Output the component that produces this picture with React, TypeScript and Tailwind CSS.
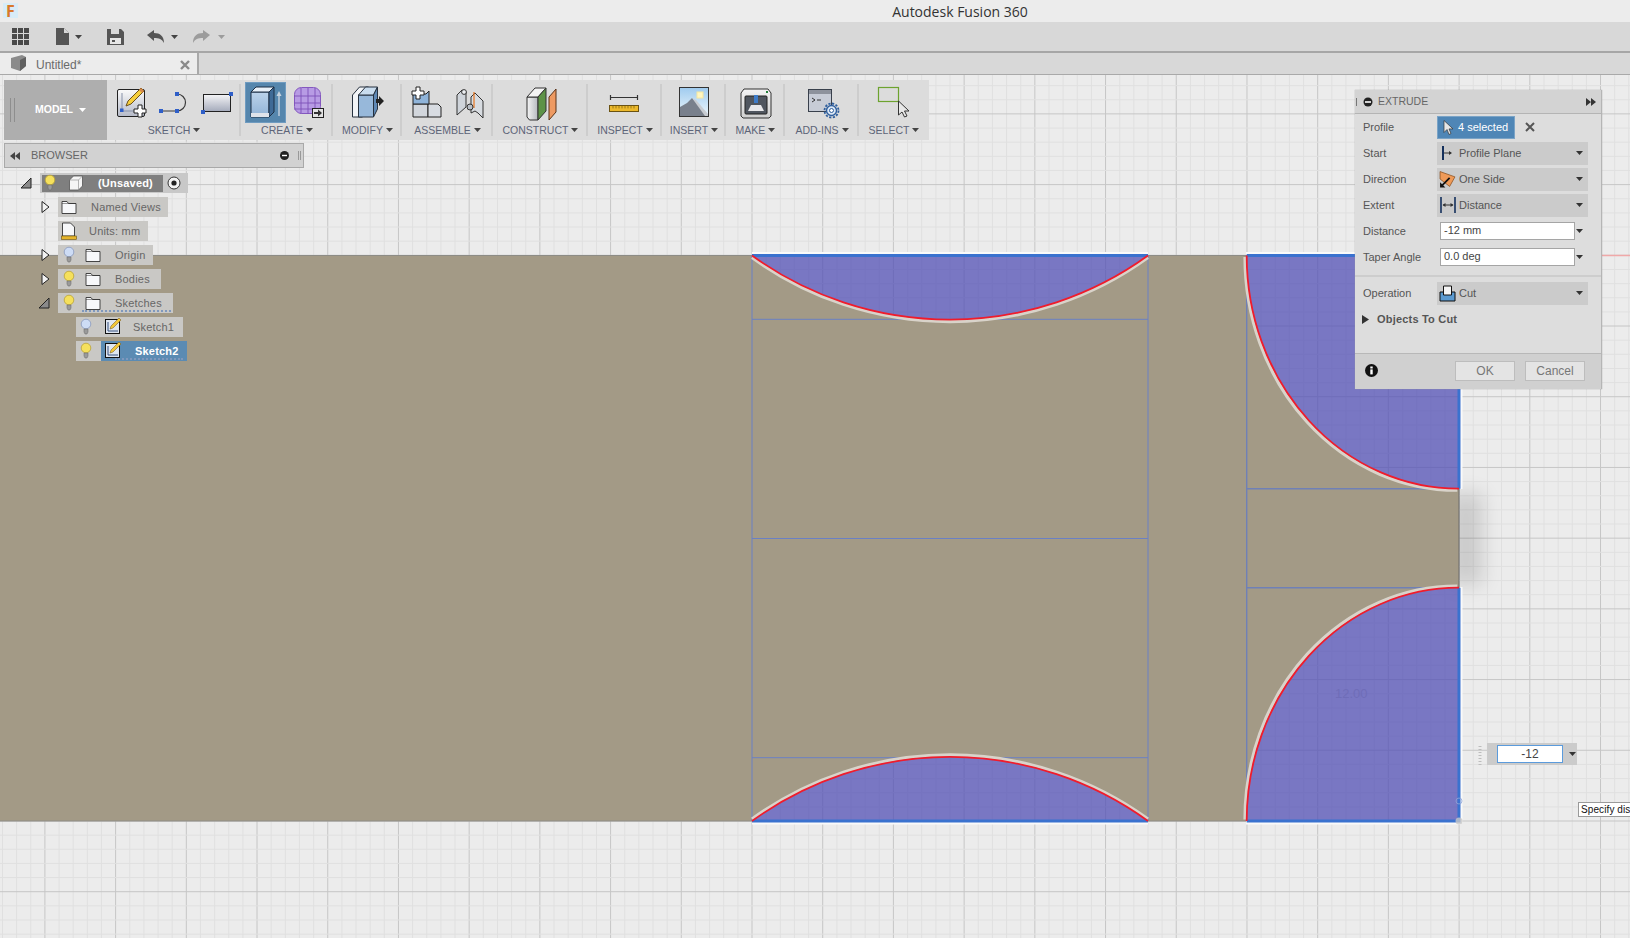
import React from 'react';

const minorX = Array.from({ length: 116 }, (_, i) => 752 - 14.142 * 53 + 14.142 * i);
const minorY = Array.from({ length: 62 }, (_, i) => 890.7 + 14.142 * 3 - 14.142 * i);
const isMajorX = (i: number) => (i - 53) % 5 === 0;
const isMajorY = (i: number) => (i - 3) % 5 === 0;

const TOP_ARC = 'M752 254.5 A338 338 0 0 0 1148 254.5';
const TR_ARC = 'M1246.7 254.5 A212 233 0 0 0 1459 487.7';
const BR_ARC = 'M1459 586.7 A212 233 0 0 0 1246.7 820';
const BOTTOM_ARC = 'M1148 820 A338 338 0 0 0 752 820';

const Caret = ({ className = 'fill-[#444]' }: { className?: string }) => (
  <svg width="7" height="4" viewBox="0 0 7 4" className={className}>
    <path d="M0 0h7L3.5 4z" />
  </svg>
);

const Drawing = () => (
  <svg className="absolute left-0 top-0" width="1630" height="864" viewBox="0 74 1630 864">
    <defs>
      <filter id="soft" x="-100%" y="-50%" width="300%" height="200%">
        <feGaussianBlur stdDeviation="10" />
      </filter>
    </defs>
    {minorX.map((x, i) => (
      <line key={i} x1={x} x2={x} y1="74" y2="938" stroke={isMajorX(i) ? '#c6c6c6' : '#e0e0e0'} strokeWidth="1" />
    ))}
    {minorY.map((y, i) => (
      <line key={i} x1="0" x2="1630" y1={y} y2={y} stroke={isMajorY(i) ? '#c6c6c6' : '#e0e0e0'} strokeWidth="1" />
    ))}
    <line x1="1602" x2="1630" y1="254.5" y2="254.5" stroke="#f0a8a8" strokeWidth="1.5" />
    <rect x="1450" y="492" width="32" height="92" fill="#000" opacity="0.14" filter="url(#soft)" />
    {/* white glow round the cut regions */}
    <path d="M752 252.5H1148M1246 252.5H1459M752 822H1148M1246 822H1461M1461 254V488M1461 586V822" stroke="#fafafa" strokeWidth="3" fill="none" />
    {/* the body */}
    <path
      d="M0 254.5 H752 A338 338 0 0 0 1148 254.5 H1246.7 A212 233 0 0 0 1459 487.7 V586.7 A212 233 0 0 0 1246.7 820 H1148 A338 338 0 0 0 752 820 H0 Z"
      fill="#a39a86"
    />
    <path d="M0 254.5H752M1148 254.5H1246" stroke="#8d8c86" strokeWidth="1" fill="none" />
    <path d="M0 820H752M1148 820H1246" stroke="#8d8c86" strokeWidth="1" fill="none" />
    <path d="M1459 487V587" stroke="#6b6b6b" strokeWidth="1" />
    {/* selected profiles */}
    <g fill="#5451b5" fillOpacity="0.76">
      <path d={`${TOP_ARC} Z`} />
      <path d={`${TR_ARC} V254.5 Z`} />
      <path d={`${BR_ARC} H1459 Z`} />
      <path d={`${BOTTOM_ARC} Z`} />
    </g>
    {/* sketch lines */}
    <path
      d="M752 254V820M1148 254V820M752 318.3H1148M752 537.5H1148M752 756.7H1148"
      stroke="#6a80c4"
      strokeWidth="1"
      fill="none"
    />
    <path d="M1246.7 254V820M1246.7 487.7H1459M1246.7 586.7H1459" stroke="#6f80b6" strokeWidth="1.4" fill="none" />
    <path d="M752 254.5H1148M1246.7 254.5H1459V487.7M1459 586.7V820H1246.7M1148 820H752" stroke="#3a72cf" strokeWidth="3" fill="none" />
    {/* arcs: light edge on the body side, red on the line */}
    <g fill="none" stroke="#d9d3ca" strokeWidth="3.2">
      <path d={TOP_ARC} transform="translate(0 2)" />
      <path d={TR_ARC} transform="translate(-1.7 1.5)" />
      <path d={BR_ARC} transform="translate(-1.7 -1.5)" />
      <path d={BOTTOM_ARC} transform="translate(0 -2)" />
    </g>
    <g fill="none" stroke="#f01c2c" strokeWidth="1.8">
      <path d={TOP_ARC} />
      <path d={TR_ARC} />
      <path d={BR_ARC} />
      <path d={BOTTOM_ARC} />
    </g>
    <circle cx="1459" cy="820" r="3.5" fill="#c8c8c8" opacity="0.8" />
    <circle cx="1459" cy="800" r="3" fill="none" stroke="#8fa5d8" opacity="0.8" />
    <text x="1335" y="697" fontSize="13" fill="#6f6db8" fontFamily="Liberation Sans, sans-serif">
      12.00
    </text>
    <line x1="1480" x2="1480" y1="745" y2="764" stroke="#bdbdbd" strokeWidth="3" strokeDasharray="1 2" />
  </svg>
);

const NewSketchIcon = () => (
  <svg width="40" height="40" viewBox="0 0 40 40">
    <defs>
      <linearGradient id="sk" x1="0" y1="0" x2="0" y2="1">
        <stop offset="0" stopColor="#fafafa" />
        <stop offset="1" stopColor="#b5bac8" />
      </linearGradient>
    </defs>
    <rect x="6.5" y="6.5" width="27" height="27" rx="1.5" fill="url(#sk)" stroke="#222" />
    <path d="M11 10v18h18" stroke="#8791a8" fill="none" />
    <rect x="9" y="25.5" width="3.5" height="3.5" fill="#2f5fc8" />
    <path d="M30 5l3 3-13 13-5 2 2-5z" fill="#f6cf3c" stroke="#6b4f1c" />
    <path d="M30 5l3 3-2 2-3-3z" fill="#d78a4a" />
    <path d="M27 22h4v4h4v4h-4v4h-4v-4h-4v-4h4z" fill="#fff" stroke="#222" />
  </svg>
);

const LineIcon = () => (
  <svg width="40" height="40" viewBox="0 0 40 40">
    <path d="M7 28H23A8.5 8.5 0 0 0 23 11" fill="none" stroke="#3a3a3a" strokeWidth="1.2" />
    <rect x="5" y="26" width="4" height="4" fill="#2f5fc8" />
    <rect x="21" y="26" width="4" height="4" fill="#2f5fc8" />
    <rect x="21" y="9" width="4" height="4" fill="#2f5fc8" />
  </svg>
);

const RectIcon = () => (
  <svg width="40" height="40" viewBox="0 0 40 40">
    <defs>
      <linearGradient id="rc" x1="0" y1="0" x2="0" y2="1">
        <stop offset="0" stopColor="#f5f5f7" />
        <stop offset="1" stopColor="#a4aabb" />
      </linearGradient>
    </defs>
    <rect x="6.5" y="11.5" width="27" height="17" fill="url(#rc)" stroke="#222" />
    <rect x="32" y="9" width="4" height="4" fill="#2f5fc8" />
    <rect x="4" y="27" width="4" height="4" fill="#2f5fc8" />
  </svg>
);

const ExtrudeIcon = () => (
  <svg width="39" height="39" viewBox="0 0 39 39">
    <defs>
      <linearGradient id="ex" x1="0" y1="0" x2="0" y2="1">
        <stop offset="0" stopColor="#bcd3ea" />
        <stop offset="1" stopColor="#8fb2d6" />
      </linearGradient>
    </defs>
    <path d="M5 9h18v25H5z" fill="url(#ex)" stroke="#1d2f44" />
    <path d="M5 9l5-5h18l-5 5z" fill="#e8f0f8" stroke="#1d2f44" />
    <path d="M23 9l5-5v25l-5 5z" fill="#3f6a96" stroke="#1d2f44" />
    <path d="M5 30h18v4H5z" fill="#dfe3ea" />
    <path d="M33 33V10" stroke="#c6d2de" strokeWidth="1.4" />
    <path d="M33 8l-2.5 5h5z" fill="#c6d2de" />
  </svg>
);

const FormIcon = () => (
  <svg width="40" height="40" viewBox="0 0 40 40">
    <rect x="6.5" y="4.5" width="26" height="26" rx="7" fill="#b79be4" stroke="#8458bf" />
    <path d="M6 13h26M6 20h26M6 26h26M13 5v26M20 5v26M27 5v26" stroke="#7d50b8" strokeWidth="0.9" />
    <rect x="24.5" y="25.5" width="11" height="9" fill="#e4e4e4" stroke="#222" />
    <path d="M26 29h4v-2.5l4 3.5-4 3.5V31h-4z" fill="#333" />
  </svg>
);

const PressPullIcon = () => (
  <svg width="40" height="40" viewBox="0 0 40 40">
    <path d="M4.5 34V12l7-8h9l-6 8v22z" fill="#f2f4f7" stroke="#26313f" />
    <path d="M10.5 12h15v22h-15z" fill="#97b8da" stroke="#26313f" />
    <path d="M10.5 12l7-8h12l-4 8z" fill="#c9dcee" stroke="#26313f" />
    <path d="M25.5 12l4-8v22l-4 8z" fill="#5f88b4" stroke="#26313f" />
    <path d="M28 16h3v-3l5 5-5 5v-3h-3z" fill="#222" />
  </svg>
);

const NewComponentIcon = () => (
  <svg width="40" height="40" viewBox="0 0 40 40">
    <path d="M7 21h15v13H7z" fill="#d2d6dc" stroke="#222" />
    <path d="M22 21h10l3 3v10H22z" fill="#d8dce2" stroke="#222" />
    <path d="M7 21l0-10h13l3-3v13H7z" fill="#8fb4da" stroke="#222" />
    <path d="M10 4h4v4h4v4h-4v4h-4v-4H6V8h4z" fill="#fff" stroke="#222" />
  </svg>
);

const JointIcon = () => (
  <svg width="40" height="40" viewBox="0 0 40 40">
    <path d="M8 32V12l5-5 4 2v15z" fill="#cfd4da" stroke="#333" />
    <circle cx="15" cy="9" r="2.4" fill="#eef0f3" stroke="#333" />
    <path d="M22 30l0-16 4-4 8 8v17l-5-5-3-2z" fill="#d8dce1" stroke="#333" />
    <path d="M25 9v16" stroke="#e8731c" strokeWidth="1.2" />
    <circle cx="21" cy="24" r="3" fill="#b8bec6" stroke="#333" />
  </svg>
);

const ConstructIcon = () => (
  <svg width="40" height="40" viewBox="0 0 40 40">
    <defs>
      <linearGradient id="co" x1="0" y1="0" x2="1" y2="0">
        <stop offset="0" stopColor="#f5f5f5" />
        <stop offset="1" stopColor="#b4b8be" />
      </linearGradient>
    </defs>
    <path d="M6 14h11v23H8.5L6 34z" fill="url(#co)" stroke="#333" />
    <path d="M6 14l8-9h11l-8 9z" fill="#f4f4f4" stroke="#333" />
    <path d="M17 14l8-9v23l-8 9z" fill="#5d9247" stroke="#333" />
    <path d="M28 14l7-8v23l-7 8z" fill="#ee9a62" stroke="#5a3318" />
  </svg>
);

const InspectIcon = () => (
  <svg width="40" height="40" viewBox="1 0 40 40">
    <path d="M6 14.5h28M6.5 12v5M33.5 12v5" stroke="#333" strokeWidth="1.2" />
    <rect x="5.5" y="22.5" width="29" height="6" fill="#ecb92c" stroke="#6b5312" />
    <path d="M9 23v2.4M12 23v2.4M15 23v2.4M18 23v2.4M21 23v2.4M24 23v2.4M27 23v2.4M30 23v2.4" stroke="#7a5e10" strokeWidth="0.7" />
  </svg>
);

const InsertIcon = () => (
  <svg width="40" height="40" viewBox="0 0 40 40">
    <defs>
      <linearGradient id="sky" x1="0" y1="0" x2="0" y2="1">
        <stop offset="0" stopColor="#9fcbef" />
        <stop offset="1" stopColor="#eef6fb" />
      </linearGradient>
    </defs>
    <rect x="5.5" y="4.5" width="29" height="29" fill="url(#sky)" stroke="#333" />
    <rect x="23" y="9" width="6" height="6" fill="#fff6c0" stroke="#f6e7a0" />
    <path d="M6 33V24l7-4 5-5 6 6 10 11v1z" fill="#79808c" />
    <path d="M18 15l4 2 12 14v2h-3z" fill="#c8ccd2" />
  </svg>
);

const MakeIcon = () => (
  <svg width="40" height="40" viewBox="0 0 40 40">
    <defs>
      <linearGradient id="mk" x1="0" y1="0" x2="0" y2="1">
        <stop offset="0" stopColor="#f4f4f4" />
        <stop offset="1" stopColor="#cfcfcf" />
      </linearGradient>
    </defs>
    <path d="M8 6h24l3 4v23l-2 2H7l-2-2V10z" fill="url(#mk)" stroke="#333" />
    <rect x="9" y="13" width="22" height="18" rx="1" fill="#50565f" stroke="#222" />
    <rect x="18" y="12" width="4" height="8" fill="#3f7cc8" />
    <path d="M12 28l3-6h10l3 6z" fill="#e8e8ea" />
    <rect x="30" y="8" width="2" height="2" fill="#22803a" />
  </svg>
);

const AddInsIcon = () => (
  <svg width="40" height="40" viewBox="1 0 40 40">
    <rect x="7.5" y="6.5" width="23" height="22" fill="#c7ccd6" stroke="#39404c" />
    <rect x="8" y="7" width="22" height="4" fill="#8d929c" />
    <path d="M11 15l3 2-3 2M16 17h4" stroke="#222" strokeWidth="0.9" fill="none" />
    <circle cx="30.5" cy="27.5" r="5" fill="#dbe7f5" stroke="#2f5f9e" strokeWidth="1.4" />
    <circle cx="30.5" cy="27.5" r="7" fill="none" stroke="#2f5f9e" strokeWidth="1.8" strokeDasharray="2.2 1.5" />
    <circle cx="30.5" cy="27.5" r="2" fill="#fff" stroke="#2f5f9e" />
  </svg>
);

const SelectIcon = () => (
  <svg width="40" height="40" viewBox="2 0 40 40">
    <rect x="6.5" y="4.5" width="20" height="14" fill="none" stroke="#6da32f" strokeWidth="1.2" />
    <path d="M26.5 18v14l3.5-3 2.5 5 2.5-1-2.5-5h4.5z" fill="#e8e8e8" stroke="#333" />
  </svg>
);

const Section = ({ label, width, children, last }: { label: string; width: string; children: React.ReactNode; last?: boolean }) => (
  <div className={`flex flex-col items-center ${width} relative`}>
    <div className="mt-[3px] flex h-[40px] items-start justify-center gap-[3px]">{children}</div>
    <div className="flex items-center gap-[3px] whitespace-nowrap text-[10.5px] leading-[14px] text-[#5d6478]">
      {label}
      <Caret />
    </div>
    {!last && <div className="absolute bottom-[4px] right-0 top-[4px] w-[2px] bg-[#cdcdcd]" />}
  </div>
);

const Toolbar = () => (
  <div className="ml-1 flex h-[60px] w-[925px] bg-[#dcdcdc]">
    <div className="relative flex w-[103px] items-center justify-center gap-[6px] bg-[#aeaeae] pl-[10px] text-[10.5px] font-bold text-white">
      <div className="absolute left-[6px] top-[18px] h-[24px] w-[5px] border-x border-[#8e8e8e]" />
      MODEL
      <Caret className="fill-white" />
    </div>
    <Section label="SKETCH" width="w-[134px]">
      <NewSketchIcon />
      <LineIcon />
      <RectIcon />
    </Section>
    <Section label="CREATE" width="w-[92px]">
      <div className="bg-[#5586ad] ring-1 ring-[#6f9bc0]">
        <ExtrudeIcon />
      </div>
      <FormIcon />
    </Section>
    <Section label="MODIFY" width="w-[69px]">
      <PressPullIcon />
    </Section>
    <Section label="ASSEMBLE" width="w-[91px]">
      <NewComponentIcon />
      <JointIcon />
    </Section>
    <Section label="CONSTRUCT" width="w-[95px]">
      <ConstructIcon />
    </Section>
    <Section label="INSPECT" width="w-[74px]">
      <InspectIcon />
    </Section>
    <Section label="INSERT" width="w-[64px]">
      <InsertIcon />
    </Section>
    <Section label="MAKE" width="w-[59px]">
      <MakeIcon />
    </Section>
    <Section label="ADD-INS" width="w-[74px]">
      <AddInsIcon />
    </Section>
    <Section label="SELECT" width="w-[70px]" last>
      <SelectIcon />
    </Section>
  </div>
);

const Bulb = ({ on }: { on: boolean }) => (
  <svg width="12" height="18" viewBox="0 0 12 18">
    <circle cx="6" cy="6" r="4.8" fill={on ? '#f5e05c' : '#cddcf5'} stroke={on ? '#b9a236' : '#8898bc'} strokeWidth="0.8" />
    <path d="M4 11h4v3l-1 2H5l-1-2z" fill="#9a9a9a" stroke="#666" strokeWidth="0.5" />
  </svg>
);

const FolderIcon = () => (
  <svg width="16" height="14" viewBox="0 0 16 14">
    <path d="M1 1.5h5l1.5 2h7.5v10H1z" fill="#f7f8fa" stroke="#333" strokeWidth="0.9" />
    <path d="M1 3.5h14" stroke="#333" strokeWidth="0.5" />
  </svg>
);

const SketchDocIcon = () => (
  <svg width="18" height="18" viewBox="0 0 18 18">
    <rect x="1.5" y="1.5" width="14" height="14" fill="#dfe6f0" stroke="#111" />
    <path d="M4 4v9h10" stroke="#36507e" fill="none" />
    <path d="M15 0l2 2-8 8-3 1 1-3z" fill="#f3c838" stroke="#6b4f1c" strokeWidth="0.5" />
  </svg>
);

const Expander = ({ open }: { open?: boolean }) => (
  <svg width="12" height="14" viewBox="0 0 12 14" className={open ? '-ml-[2px]' : ''}>
    {open ? (
      <path d="M11 2v10H1z" fill="#8a8a8a" stroke="#222" />
    ) : (
      <path d="M2 1.5l7 5.5-7 5.5z" fill="#f2f2f2" stroke="#222" />
    )}
  </svg>
);

const TreeRow = ({ indent, expander, children, width }: { indent: string; expander?: 'open' | 'closed'; children: React.ReactNode; width: string }) => (
  <div className={`flex h-5 items-center ${indent}`}>
    <div className="flex w-[18px] items-center">{expander && <Expander open={expander === 'open'} />}</div>
    <div className={`relative flex h-5 items-center bg-[#c9c8c5] text-[11px] tracking-[0.2px] text-[#666] ${width}`}>{children}</div>
  </div>
);

const Browser = () => (
  <div className="mt-[3px] flex flex-col">
    <div className="ml-1 flex h-[25px] w-[300px] items-center border border-[#a9a9a9] bg-[#d2d2d2] text-[11px] text-[#666]">
      <svg width="10" height="8" viewBox="0 0 10 8" className="ml-[5px] fill-[#444]">
        <path d="M5 0v8L0 4zM10 0v8L5 4z" />
      </svg>
      <span className="ml-[11px] flex-1">BROWSER</span>
      <svg width="9" height="9" viewBox="0 0 9 9">
        <circle cx="4.5" cy="4.5" r="4.5" fill="#222" />
        <rect x="2" y="3.8" width="5" height="1.4" fill="#fff" />
      </svg>
      <div className="ml-[9px] mr-[2px] h-[9px] w-[3px] border-x border-[#999]" />
    </div>
    <div className="mt-[5px] flex flex-col gap-1">
      <div className="flex h-5 items-center pl-[22px]">
        <div className="flex w-[18px] items-center">
          <Expander open />
        </div>
        <div className="flex h-5 w-[148px] items-center bg-[#c8c8c8] pl-[2px]">
          <div className="flex h-[17px] w-[121px] items-center bg-[#7f7f7f] pl-[2px]">
            <Bulb on />
            <svg width="16" height="16" viewBox="0 0 16 16" className="ml-[12px]">
              <path d="M1.5 5l4-4h9v10l-4 4h-9z" fill="#f5f5f5" stroke="#555" strokeWidth="0.8" />
              <path d="M1.5 5h9v10M10.5 5l4-4" fill="none" stroke="#888" strokeWidth="0.6" />
            </svg>
            <span className="ml-[14px] text-[11px] font-bold tracking-[0.2px] text-white">(Unsaved)</span>
          </div>
          <svg width="14" height="14" viewBox="0 0 14 14" className="ml-1">
            <circle cx="7" cy="7" r="6" fill="#f4f4f4" stroke="#333" />
            <circle cx="7" cy="7" r="2.6" fill="#222" />
          </svg>
        </div>
      </div>
      <TreeRow indent="pl-[40px]" expander="closed" width="w-[110px]">
        <span className="ml-[3px]"><FolderIcon /></span>
        <span className="ml-[14px]">Named Views</span>
      </TreeRow>
      <TreeRow indent="pl-[40px]" width="w-[90px]">
        <svg width="16" height="18" viewBox="0 0 16 18" className="ml-[3px]">
          <path d="M1.5 1h8l4 4v9h-12z" fill="#f6f7f9" stroke="#333" strokeWidth="0.9" />
          <rect x="0.5" y="14" width="15" height="3.5" fill="#e5b52c" stroke="#6b5312" strokeWidth="0.6" />
        </svg>
        <span className="ml-[12px]">Units: mm</span>
      </TreeRow>
      <TreeRow indent="pl-[40px]" expander="closed" width="w-[95px]">
        <span className="ml-[5px] flex"><Bulb on={false} /></span>
        <span className="ml-[10px]"><FolderIcon /></span>
        <span className="ml-[14px]">Origin</span>
      </TreeRow>
      <TreeRow indent="pl-[40px]" expander="closed" width="w-[103px]">
        <span className="ml-[5px] flex"><Bulb on /></span>
        <span className="ml-[10px]"><FolderIcon /></span>
        <span className="ml-[14px]">Bodies</span>
      </TreeRow>
      <TreeRow indent="pl-[40px]" expander="open" width="w-[115px]">
        <span className="ml-[5px] flex"><Bulb on /></span>
        <span className="ml-[10px]"><FolderIcon /></span>
        <span className="ml-[14px]">Sketches</span>
        <div className="absolute bottom-px left-6 right-[2px] h-[2px] border-b-2 border-dotted border-[#7f98bd]" />
      </TreeRow>
      <TreeRow indent="pl-[58px]" width="w-[107px]">
        <span className="ml-[4px] flex"><Bulb on={false} /></span>
        <span className="ml-[12px]"><SketchDocIcon /></span>
        <span className="ml-[11px]">Sketch1</span>
      </TreeRow>
      <div className="flex h-5 items-center pl-[58px]">
        <div className="w-[18px]" />
        <div className="flex h-5 w-[111px] items-center bg-[#c9c8c5] text-[11px]">
          <span className="ml-[4px] flex"><Bulb on /></span>
          <div className="relative ml-[9px] flex h-5 flex-1 items-center bg-[#5b8bb3] pl-[3px] font-bold tracking-[0.2px] text-white">
            <SketchDocIcon />
            <span className="ml-[13px]">Sketch2</span>
            <div className="absolute bottom-px left-[14px] right-[4px] h-[2px] border-b-2 border-dotted border-[#7f98bd]" />
          </div>
        </div>
      </div>
    </div>
  </div>
);

const PanelRow = ({ label, children }: { label: string; children: React.ReactNode }) => (
  <div className="flex h-[26px] items-center pl-2">
    <span className="w-[74px] text-[#555]">{label}</span>
    {children}
  </div>
);

const Dropdown = ({ icon, value }: { icon: React.ReactNode; value: string }) => (
  <div className="flex h-[23px] w-[151px] items-center bg-[#cbcbcb] text-[#555]">
    <div className="flex w-[21px] items-center justify-center">{icon}</div>
    <span className="ml-[1px] flex-1">{value}</span>
    <Caret className="mr-[5px] fill-[#333]" />
  </div>
);

const NumberField = ({ value }: { value: string }) => (
  <div className="mb-px flex items-center">
    <div className="ml-[3px] flex h-[18px] w-[135px] items-center border border-[#a5a5a5] bg-white pl-[3px] text-[#444]">{value}</div>
    <Caret className="ml-px fill-[#333]" />
  </div>
);

const ExtrudePanel = () => (
  <div className="absolute right-[28px] top-[15px] flex h-[299px] w-[247px] flex-col border-r border-[#b5b5b5] bg-[#dddddd] text-[11px] shadow-[0_0_1px_#999]">
    <div className="flex h-[24px] items-center border-b border-[#b4b4b4] bg-[#d3d3d3] text-[10.5px] text-[#666]">
      <div className="ml-px h-2 w-px bg-[#777]" />
      <svg width="10" height="10" viewBox="0 0 10 10" className="ml-[6px]">
        <circle cx="5" cy="5" r="4.5" fill="#222" />
        <rect x="2" y="4.2" width="6" height="1.6" fill="#fff" />
      </svg>
      <span className="ml-[5px] flex-1">EXTRUDE</span>
      <svg width="10" height="8" viewBox="0 0 10 8" className="mr-[5px] fill-[#333]">
        <path d="M0 0v8l5-4zM5 0v8l5-4z" />
      </svg>
    </div>
    <PanelRow label="Profile">
      <div className="flex h-[23px] w-[78px] items-center gap-[5px] border border-[#7aa3c6] bg-[#4f86b6] pl-[5px] text-white">
        <svg width="10" height="15" viewBox="0 0 10 15">
          <path d="M1 0.5v12l3-3 2 5 2-1-2-4.6h4z" fill="#e6e6e6" stroke="#333" strokeWidth="0.7" />
        </svg>
        4 selected
      </div>
      <svg width="10" height="10" viewBox="0 0 10 10" className="ml-[10px]">
        <path d="M1 1l8 8M9 1l-8 8" stroke="#555" strokeWidth="2" />
      </svg>
    </PanelRow>
    <PanelRow label="Start">
      <Dropdown
        value="Profile Plane"
        icon={
          <svg width="14" height="16" viewBox="0 0 14 16">
            <path d="M2 1v14" stroke="#14305c" strokeWidth="2" />
            <path d="M3 8h7" stroke="#333" />
            <path d="M8 6l3 2-3 2z" fill="#333" />
          </svg>
        }
      />
    </PanelRow>
    <PanelRow label="Direction">
      <Dropdown
        value="One Side"
        icon={
          <svg width="17" height="18" viewBox="0 0 16 16">
            <path d="M1 1l14 5-5 9L1 8z" fill="#ef9a58" stroke="#8a4e1c" strokeWidth="0.7" />
            <path d="M10 7L2 15" stroke="#111" strokeWidth="1.6" />
            <path d="M1 11v5h5z" fill="#111" />
          </svg>
        }
      />
    </PanelRow>
    <PanelRow label="Extent">
      <Dropdown
        value="Distance"
        icon={
          <svg width="16" height="16" viewBox="0 0 16 16">
            <path d="M1 0v16M15 0v16" stroke="#14305c" strokeWidth="1.6" />
            <path d="M3 8h10" stroke="#333" />
            <path d="M2.5 8l3-2v4zM13.5 8l-3-2v4z" fill="#333" />
          </svg>
        }
      />
    </PanelRow>
    <PanelRow label="Distance">
      <NumberField value="-12 mm" />
    </PanelRow>
    <PanelRow label="Taper Angle">
      <NumberField value="0.0 deg" />
    </PanelRow>
    <div className="mt-[5px] h-[2px] bg-[#cdcdcd]" />
    <div className="mt-[3px]">
      <PanelRow label="Operation">
        <Dropdown
          value="Cut"
          icon={
            <svg width="17" height="17" viewBox="0 0 17 17">
              <path d="M1 7h15v9H1z" fill="#5b9ad0" stroke="#111" />
              <path d="M4.5 1h8v9h-8z" fill="#f5f5f5" stroke="#111" />
            </svg>
          }
        />
      </PanelRow>
    </div>
    <div className="flex h-[26px] items-center pl-[7px] font-bold text-[#555]">
      <svg width="7" height="9" viewBox="0 0 7 9" className="fill-[#333]">
        <path d="M0 0l7 4.5L0 9z" />
      </svg>
      <span className="ml-[8px] tracking-[0.2px]">Objects To Cut</span>
    </div>
    <div className="mt-auto flex h-[36px] items-center border-t border-[#b8b8b8] bg-[#d0d0d0] pb-[2px]">
      <svg width="13" height="13" viewBox="0 0 13 13" className="ml-[10px]">
        <circle cx="6.5" cy="6.5" r="6.5" fill="#111" />
        <rect x="5.3" y="5.4" width="2.4" height="5" fill="#fff" />
        <rect x="5.3" y="2.5" width="2.4" height="2" fill="#fff" />
      </svg>
      <button className="ml-[77px] h-5 w-[60px] border border-[#bdbdbd] bg-[#e4e4e4] text-[12px] text-[#777]">OK</button>
      <button className="ml-[10px] h-5 w-[60px] border border-[#bdbdbd] bg-[#e4e4e4] text-[12px] text-[#777]">Cancel</button>
    </div>
  </div>
);

export default function App() {
  return (
    <div className="flex h-[938px] w-[1630px] flex-col overflow-hidden bg-[#ececec] font-['Liberation_Sans',sans-serif]">
      <div className="relative flex h-[22px] items-center justify-center bg-[#ececec] pl-[290px] font-['Open_Sans',sans-serif] text-[14px] text-[#333]">
        <div className="absolute left-[3px] top-[3px] flex h-[15px] w-[15px] items-center justify-center bg-[#d7ecf8]">
          <span className="text-[16px] font-bold leading-none text-[#d9782a]">F</span>
        </div>
        Autodesk Fusion 360
      </div>
      <div className="flex h-[31px] items-center border-b-2 border-[#a6a6a6] bg-[#d8d8d8] pl-3">
        <svg width="18" height="17" viewBox="0 0 18 17" className="fill-[#4a4a4a]">
          <path d="M0 0h5v5H0zM6 0h5v5H6zM12 0h5v5h-5zM0 6h5v5H0zM6 6h5v5H6zM12 6h5v5h-5zM0 12h5v5H0zM6 12h5v5H6zM12 12h5v5h-5z" />
        </svg>
        <svg width="14" height="17" viewBox="0 0 14 17" className="ml-[26px] fill-[#555]">
          <path d="M0 0h8l5 5v12H0z" />
          <path d="M8 0v5h5" fill="#d8d8d8" />
        </svg>
        <Caret className="ml-[5px] fill-[#444]" />
        <svg width="17" height="17" viewBox="0 0 17 17" className="ml-[25px] fill-[#555]">
          <path d="M0 1h14l3 3v13H0z" />
          <rect x="4" y="1" width="8" height="5" fill="#d8d8d8" />
          <rect x="3" y="10" width="11" height="6" fill="#e6e6e6" />
          <rect x="5" y="12" width="3" height="2" fill="#555" />
        </svg>
        <svg width="17" height="13" viewBox="0 0 17 13" className="ml-[23px] fill-[#555]">
          <path d="M0 5l7-5v3c6 0 10 3 10 10-2-4-5-5-10-5v3z" />
        </svg>
        <Caret className="ml-[7px] fill-[#444]" />
        <svg width="17" height="13" viewBox="0 0 17 13" className="ml-[15px] fill-[#9c9c9c]">
          <path d="M17 5l-7-5v3C4 3 0 6 0 13c2-4 5-5 10-5v3z" />
        </svg>
        <Caret className="ml-[8px] fill-[#9c9c9c]" />
      </div>
      <div className="flex h-[22px] border-b border-[#a9a9a9] bg-[#d8d8d8]">
        <div className="flex w-[199px] items-center border-r-2 border-[#a9a9a9] bg-[#ececec] pl-[10px] pt-[2px]">
          <svg width="17" height="16" viewBox="0 0 17 16" className="-mt-[3px]">
            <path d="M1 3l11-3 4 2v9l-6 5-9-3z" fill="#8b8b8b" />
            <path d="M10 5l6-3v9l-6 5z" fill="#606060" />
          </svg>
          <span className="ml-[9px] flex-1 text-[12px] text-[#6a6a6a]">Untitled*</span>
          <svg width="10" height="10" viewBox="0 0 10 10" className="mr-[7px]">
            <path d="M1 1l8 8M9 1l-8 8" stroke="#8a8a8a" strokeWidth="2.4" />
          </svg>
        </div>
      </div>
      <div className="relative flex-1">
        <Drawing />
        <div className="absolute left-0 top-[5px] flex flex-col">
          <Toolbar />
          <Browser />
        </div>
        <ExtrudePanel />
        <div className="absolute left-[1487px] top-[668px] flex h-[22px] w-[90px] items-center bg-[#cbcbcb] pl-[10px]">
          <div className="flex h-[18px] w-[66px] items-center justify-center border border-[#5b9bdc] bg-white text-[12px] text-[#444]">-12</div>
          <Caret className="ml-[6px] fill-[#333]" />
        </div>
        <div className="absolute left-[1578px] top-[727px] flex h-[15px] w-[52px] items-center whitespace-nowrap border border-r-0 border-[#9a9a9a] bg-white pl-[2px] text-[10px] tracking-[0.1px] text-[#111]">
          Specify dis
        </div>
      </div>
    </div>
  );
}
